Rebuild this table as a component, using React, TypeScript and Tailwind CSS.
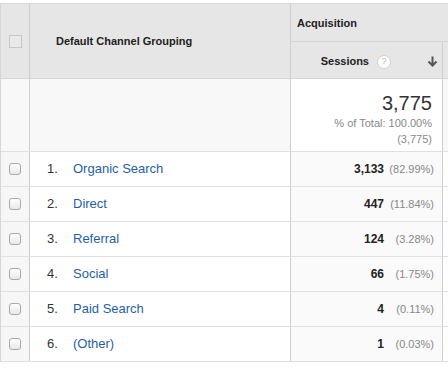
import React from "react";

const rows = [
  { n: 1, name: "Organic Search", v: "3,133", p: "(82.99%)" },
  { n: 2, name: "Direct", v: "447", p: "(11.84%)" },
  { n: 3, name: "Referral", v: "124", p: "(3.28%)" },
  { n: 4, name: "Social", v: "66", p: "(1.75%)" },
  { n: 5, name: "Paid Search", v: "4", p: "(0.11%)" },
  { n: 6, name: "(Other)", v: "1", p: "(0.03%)" },
];

function RowCheckbox() {
  return (
    <div className="h-[12px] w-[12px] rounded-[3px] border border-[#a9a9a9] bg-gradient-to-b from-white to-[#e8e8e8]" />
  );
}

export default function App() {
  return (
    <div
      className="w-[448px] h-[375px] bg-white overflow-hidden pt-[3px]"
      style={{ fontFamily: '"Liberation Sans", Arial, sans-serif' }}
    >
      <div className="border-t border-l border-[#d6d6d6]">
        {/* Header */}
        <div className="flex h-[75px] bg-[#e6e6e6] border-b border-[#d4d4d4]">
          <div className="w-[29px] shrink-0 border-r border-[#cfcfcf] flex items-center justify-center">
            <div className="h-[13px] w-[13px] border border-[#c8c8c8] bg-[#e9e9e9] ml-[1px] mt-[1px]" />
          </div>
          <div className="w-[261px] shrink-0 border-r border-[#cfcfcf] flex items-center pl-[26px]">
            <span className="text-[11px] font-bold text-[#222]">Default Channel Grouping</span>
          </div>
          <div className="flex-1 flex flex-col">
            <div className="h-[38px] border-b border-[#d4d4d4] flex items-center pl-[6px] pt-[1px]">
              <span className="text-[11px] font-bold text-[#222]">Acquisition</span>
            </div>
            <div className="flex-1 flex">
              <div className="w-[152px] shrink-0 border-r border-[#cfcfcf] flex items-center justify-end pr-[4px] pt-[3px]">
                <span className="text-[11px] font-bold text-[#222]">Sessions</span>
                <span className="ml-[8px] h-[14px] w-[14px] rounded-full border border-[#d0d0d0] bg-white flex items-center justify-center text-[9px] text-[#bbb] leading-none">
                  ?
                </span>
                <svg className="ml-[36px]" width="11" height="11" viewBox="0 0 11 11">
                  <line x1="5.5" y1="0.5" x2="5.5" y2="9.5" stroke="#555" strokeWidth="2" />
                  <polyline points="1.5,5.5 5.5,9.5 9.5,5.5" fill="none" stroke="#555" strokeWidth="2" />
                </svg>
              </div>
              <div className="flex-1" />
            </div>
          </div>
        </div>

        {/* Summary */}
        <div className="flex h-[73px] bg-[#f8f8f8] border-b border-[#e0e0e0]">
          <div className="w-[29px] shrink-0 border-r border-[#cfcfcf]" />
          <div className="w-[261px] shrink-0 border-r border-[#cfcfcf]" />
          <div className="w-[152px] shrink-0 border-r border-[#cfcfcf] bg-white flex flex-col items-end pr-[10px] pt-[13px]">
            <span className="text-[20px] leading-[22px] text-[#333]">3,775</span>
            <span className="text-[11px] leading-[16px] text-[#888] mt-[1px]">% of Total: 100.00%</span>
            <span className="text-[11px] leading-[16px] text-[#888]">(3,775)</span>
          </div>
          <div className="flex-1" />
        </div>

        {/* Rows */}
        {rows.map((r) => (
          <div key={r.n} className="flex h-[35px] border-b border-[#e0e0e0]">
            <div className="w-[29px] shrink-0 border-r border-[#cfcfcf] bg-[#f6f6f6] flex items-center justify-center">
              <div className="mr-[1px]">
                <RowCheckbox />
              </div>
            </div>
            <div className="w-[261px] shrink-0 border-r border-[#cfcfcf] bg-white flex items-center pl-[17px]">
              <span className="w-[26px] text-[13px] text-[#333]">{r.n}.</span>
              <span className="text-[13px] text-[#1f5fa6]">{r.name}</span>
            </div>
            <div className="w-[152px] shrink-0 border-r border-[#cfcfcf] bg-[#fafafa] flex items-center justify-end pr-[8px]">
              <span className="text-[12px] font-bold text-[#222]">{r.v}</span>
              <span className="w-[50px] text-right text-[11px] text-[#888]">{r.p}</span>
            </div>
            <div className="flex-1 bg-white" />
          </div>
        ))}
      </div>
    </div>
  );
}
